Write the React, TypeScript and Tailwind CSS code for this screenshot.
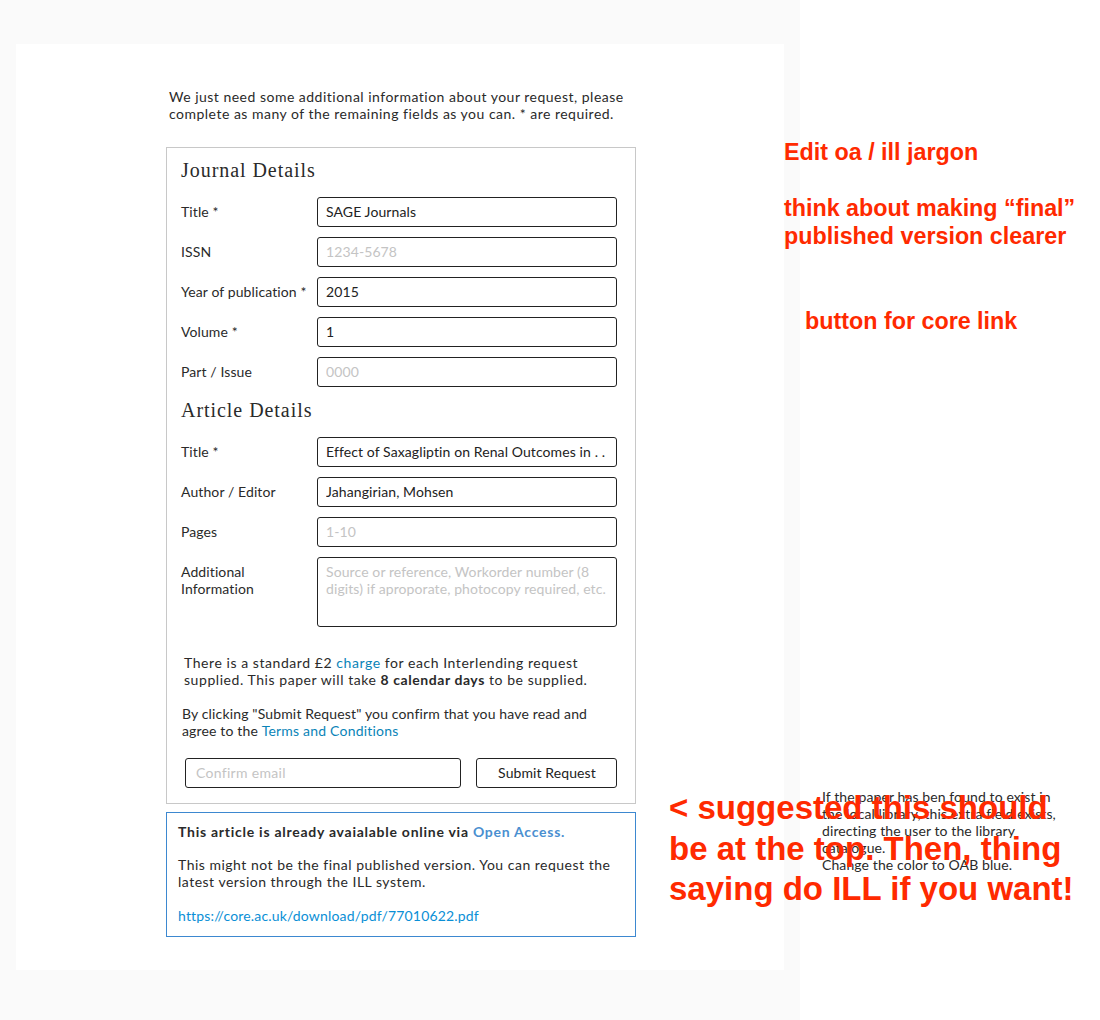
const sans = "font-['Lato','Noto_Sans',sans-serif]";

function Field({ label, value, placeholder }: { label: string; value?: string; placeholder?: string }) {
  return (
    <div className="flex h-[30px] items-center">
      <label className="w-[136px] shrink-0 pb-[1px] text-[14px] tracking-[0.1px] text-[#2a2a2a]">{label}</label>
      <input
        readOnly
        value={value ?? ''}
        placeholder={placeholder}
        className="h-[30px] w-[300px] rounded-[3px] border border-[#222] bg-white px-2 pb-[2px] text-[14px] tracking-[0.1px] text-[#222] outline-none placeholder:text-[#c4c4c4]"
      />
    </div>
  );
}

function Heading({ children }: { children: string }) {
  return (
    <h2 className="font-['Liberation_Serif',serif] text-[20px] leading-[24px] tracking-[0.95px] text-[#2a2a2a]">
      {children}
    </h2>
  );
}

function Note({ children, className }: { children: React.ReactNode; className: string }) {
  return (
    <div className={`absolute font-['Liberation_Sans',Arial,sans-serif] font-bold text-[#ff2a00] ${className}`}>
      {children}
    </div>
  );
}

export default function App() {
  return (
    <div className={`relative h-[1020px] w-[1100px] overflow-hidden bg-white ${sans}`}>
      <div className="h-full w-[800px] bg-[#fafafa] px-4 pt-[44px]">
        <div className="h-[926px] w-[768px] bg-white pl-[150px] pt-[44px]">
          <p className="ml-[3px] w-[467px] text-[14px] leading-[17px] tracking-[0.49px] text-[#2a2a2a]">
            We just need some additional information about your request, please complete as many of the remaining fields as you can. * are required.
          </p>

          <div className="mt-[25px] h-[657px] w-[470px] border border-[#c8c8c8] pl-[14px] pr-[18px] pt-[10px]">
            <Heading>Journal Details</Heading>
            <div className="mt-[15px] flex flex-col gap-[10px]">
              <Field label="Title *" value="SAGE Journals" />
              <Field label="ISSN" placeholder="1234-5678" />
              <Field label="Year of publication *" value="2015" />
              <Field label="Volume *" value="1" />
              <Field label="Part / Issue" placeholder="0000" />
            </div>

            <div className="mt-[11px]">
              <Heading>Article Details</Heading>
            </div>
            <div className="mt-[15px] flex flex-col gap-[10px]">
              <Field label="Title *" value="Effect of Saxagliptin on Renal Outcomes in . ." />
              <Field label="Author / Editor" value="Jahangirian, Mohsen" />
              <Field label="Pages" placeholder="1-10" />
              <div className="flex h-[70px]">
                <label className="w-[136px] shrink-0 pt-[6px] text-[14px] leading-[17px] tracking-[0.1px] text-[#2a2a2a]">
                  Additional Information
                </label>
                <textarea
                  readOnly
                  placeholder="Source or reference, Workorder number (8 digits) if aproporate, photocopy required, etc."
                  className="h-[70px] w-[300px] resize-none rounded-[3px] border border-[#222] px-2 pt-[5px] text-[14px] leading-[17px] tracking-[0.1px] outline-none placeholder:text-[#c4c4c4]"
                />
              </div>
            </div>

            <p className="ml-[3px] mt-[27px] text-[14px] leading-[17px] tracking-[0.56px] text-[#2a2a2a]">
              There is a standard £2 <span className="text-[#0a84b8]">charge</span> for each Interlending request supplied. This paper will take <b className="font-bold">8 calendar days</b> to be supplied.
            </p>
            <p className="ml-[1px] mt-[17px] text-[14px] leading-[17px] tracking-[0.15px] text-[#2a2a2a]">
              By clicking "Submit Request" you confirm that you have read and agree to the <span className="tracking-[0.2px] text-[#0a84b8]">Terms and Conditions</span>
            </p>

            <div className="ml-[4px] mt-[19px] flex gap-[15px]">
              <input
                readOnly
                placeholder="Confirm email"
                className="h-[30px] w-[276px] rounded-[3px] border border-[#222] px-[10px] pb-[2px] text-[14px] tracking-[0.3px] outline-none placeholder:text-[#c4c4c4]"
              />
              <button className="h-[30px] w-[141px] rounded-[3px] border border-[#222] pb-[2px] pl-[1px] text-[14px] tracking-[0.1px] text-[#222]">
                Submit Request
              </button>
            </div>
          </div>

          <div className="mt-[8px] h-[125px] w-[470px] border border-[#3d88d0] pl-[11px] pt-[10px] text-[14px] leading-[17px] tracking-[0.5px] text-[#2a2a2a]">
            <p className="font-bold tracking-[0.74px]">
              This article is already avaialable online via <span className="text-[#4a8fd0]">Open Access.</span>
            </p>
            <p className="mt-[16px]">
              This might not be the final published version. You can request the latest version through the ILL system.
            </p>
            <p className="mt-[17px] tracking-[0.17px] text-[#0a8fd6]">https://core.ac.uk/download/pdf/77010622.pdf</p>
          </div>
        </div>
      </div>

      {/* side note under the red comment */}
      <div className="absolute left-[822px] top-[788px] w-[245px] text-[14px] leading-[17px] tracking-[0.1px] text-[#2a2a2a]">
        <p>
          If the paper has ben found to exist in
          <br />
          the local library, this extra field exists,
          <br />
          directing the user to the library
          <br />
          catalogue.
        </p>
        <p>Change the color to OAB blue.</p>
      </div>

      <Note className="left-[784px] top-[138px] text-[23.3px] leading-[28px]">Edit oa / ill jargon</Note>
      <Note className="left-[784px] top-[194px] text-[23.3px] leading-[28px]">
        think about making “final”
        <br />
        published version clearer
      </Note>
      <Note className="left-[805px] top-[307px] text-[23.3px] leading-[28px]">button for core link</Note>
      <Note className="left-[669px] top-[788px] text-[33px] leading-[40.5px]">
        {'<'} suggested this should
        <br />
        be at the top. Then, thing
        <br />
        saying do ILL if you want!
      </Note>
    </div>
  );
}
